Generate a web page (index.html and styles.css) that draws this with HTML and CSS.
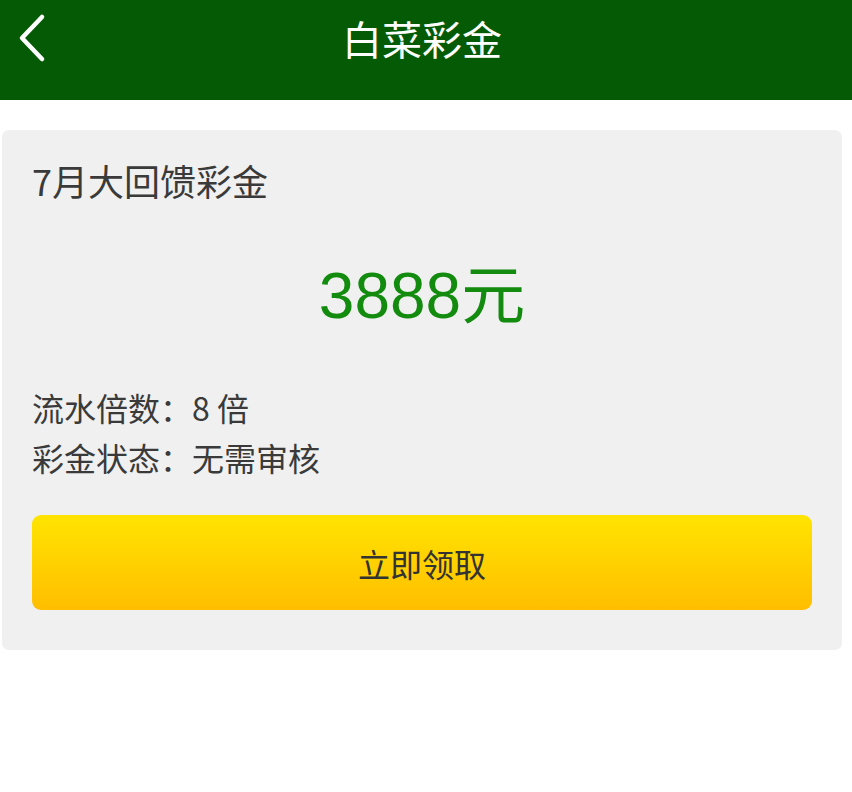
FILE: index.html
```html
<!DOCTYPE html>
<html lang="zh-CN">
<head>
  <meta charset="UTF-8">
  <meta name="viewport" content="width=device-width, initial-scale=1.0">
  <title>白菜彩金</title>
  <link rel="stylesheet" href="styles.css">
</head>
<body>
  <header class="topbar">
    <a class="back" href="#">
      <svg width="30" height="50" viewBox="0 0 30 50"><path d="M26 4 L6 25 L26 46" fill="none" stroke="#fff" stroke-width="4.5" stroke-linecap="round" stroke-linejoin="round"/></svg>
    </a>
    <h1>白菜彩金</h1>
  </header>
  <div class="card">
    <div class="card-title">7月大回馈彩金</div>
    <div class="amount">3888元</div>
    <div class="info">
      <div>流水倍数：8 倍</div>
      <div>彩金状态：无需审核</div>
    </div>
    <button class="claim">立即领取</button>
  </div>
</body>
</html>
```

FILE: styles.css
```css
body {
  margin: 0;
  background: #fff;
  font-family: "Noto Sans CJK SC", "Noto Sans", sans-serif;
  color: #3a3a3a;
}
.topbar {
  background: #055b05;
  height: 100px;
  display: flex;
  justify-content: center;
  position: relative;
}
.topbar h1 {
  margin: 0;
  padding: 6px 8px 0 0;
  font-size: 40px;
  font-weight: 400;
  color: #fff;
  line-height: 64px;
}
.back {
  position: absolute;
  left: 16px;
  top: 13px;
}
.card {
  margin: 30px 10px 0 2px;
  background: #f0f0f0;
  border-radius: 7px;
  padding: 28px 30px 40px 30px;
}
.card-title {
  font-size: 36px;
  line-height: 44px;
}
.amount {
  text-align: center;
  font-family: "Liberation Sans", "Noto Sans CJK SC", sans-serif;
  font-size: 64px;
  color: #138b0e;
  margin-top: 54px;
  line-height: 80px;
}
.info {
  margin-top: 46px;
  font-size: 32px;
  line-height: 50px;
}
.claim {
  display: block;
  width: 100%;
  margin-top: 33px;
  height: 95px;
  border: none;
  border-radius: 9px;
  background: linear-gradient(#ffe400, #ffbe00);
  font-family: "Noto Sans CJK SC", sans-serif;
  font-size: 32px;
  color: #333;
}
```
